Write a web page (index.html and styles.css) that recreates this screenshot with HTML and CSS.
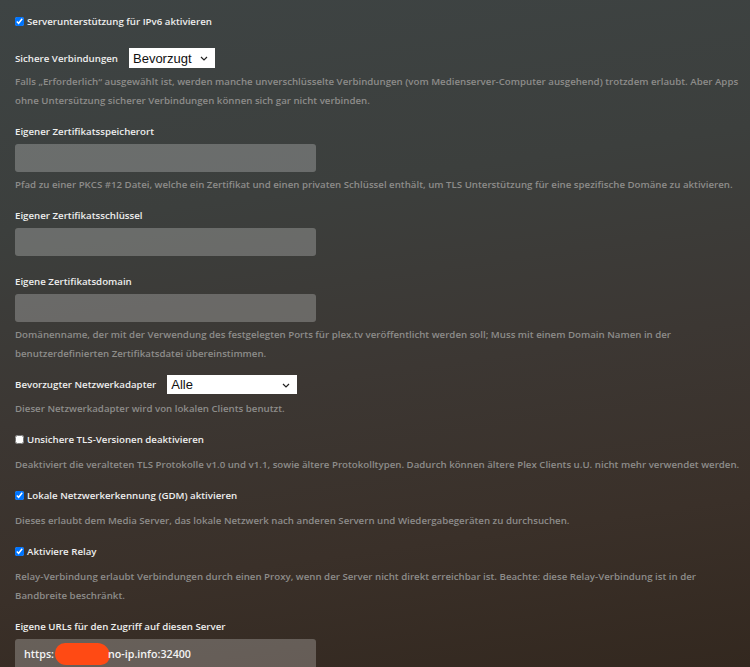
FILE: index.html
```html
<!DOCTYPE html>
<html>
<head>
    <title>Netzwerk</title>
    <link rel="stylesheet" href="styles.css">
</head>
<body>
    <div class="settings">

        <div class="setting">
            <label class="check-row"><input type="checkbox" checked> Serverunterstützung für IPv6 aktivieren</label>
        </div>

        <div class="setting select-setting">
            <div class="select-row">
                <span class="label">Sichere Verbindungen</span>
                <span class="select-wrap">
                    <select class="select short"><option>Bevorzugt</option></select>
                    <svg class="chevron" width="8" height="5" viewBox="0 0 8 5"><path d="M1 1l3 3 3-3" fill="none" stroke="#222" stroke-width="1.2"/></svg>
                </span>
            </div>
            <p class="help">Falls „Erforderlich“ ausgewählt ist, werden manche unverschlüsselte Verbindungen (vom Medienserver-Computer ausgehend) trotzdem erlaubt. Aber Apps ohne Untersützung sicherer Verbindungen können sich gar nicht verbinden.</p>
        </div>

        <div class="setting">
            <div class="label">Eigener Zertifikatsspeicherort</div>
            <input class="text-field" type="text">
            <p class="help">Pfad zu einer PKCS #12 Datei, welche ein Zertifikat und einen privaten Schlüssel enthält, um TLS Unterstützung für eine spezifische Domäne zu aktivieren.</p>
        </div>

        <div class="setting">
            <div class="label">Eigener Zertifikatsschlüssel</div>
            <input class="text-field" type="text">
        </div>

        <div class="setting spaced">
            <div class="label">Eigene Zertifikatsdomain</div>
            <input class="text-field" type="text">
            <p class="help">Domänenname, der mit der Verwendung des festgelegten Ports für plex.tv veröffentlicht werden soll; Muss mit einem Domain Namen in der benutzerdefinierten Zertifikatsdatei übereinstimmen.</p>
        </div>

        <div class="setting">
            <div class="select-row adapter">
                <span class="label">Bevorzugter Netzwerkadapter</span>
                <span class="select-wrap">
                    <select class="select wide"><option>Alle</option></select>
                    <svg class="chevron" width="8" height="5" viewBox="0 0 8 5"><path d="M1 1l3 3 3-3" fill="none" stroke="#222" stroke-width="1.2"/></svg>
                </span>
            </div>
            <p class="help">Dieser Netzwerkadapter wird von lokalen Clients benutzt.</p>
        </div>

        <div class="setting">
            <label class="check-row"><input type="checkbox"> Unsichere TLS-Versionen deaktivieren</label>
            <p class="help">Deaktiviert die veralteten TLS Protokolle v1.0 und v1.1, sowie ältere Protokolltypen. Dadurch können ältere Plex Clients u.U. nicht mehr verwendet werden.</p>
        </div>

        <div class="setting">
            <label class="check-row"><input type="checkbox" checked> Lokale Netzwerkerkennung (GDM) aktivieren</label>
            <p class="help">Dieses erlaubt dem Media Server, das lokale Netzwerk nach anderen Servern und Wiedergabegeräten zu durchsuchen.</p>
        </div>

        <div class="setting">
            <label class="check-row"><input type="checkbox" checked> Aktiviere Relay</label>
            <p class="help">Relay-Verbindung erlaubt Verbindungen durch einen Proxy, wenn der Server nicht direkt erreichbar ist. Beachte: diese Relay-Verbindung ist in der Bandbreite beschränkt.</p>
        </div>

        <div class="setting last">
            <div class="label">Eigene URLs für den Zugriff auf diesen Server</div>
            <div class="text-field filled">https:<span class="redacted"></span>no-ip.info:32400</div>
        </div>

    </div>
</body>
</html>
```

FILE: styles.css
```css
body {
    margin: 0;
    height: 667px;
    font-family: "Open Sans", "Liberation Sans", sans-serif;
    font-weight: 600;
    font-size: 9.7px;
    color: #eeeeee;
    background: linear-gradient(172deg, #3e4444 0%, #3c3f3d 30%, #3c3733 55%, #3a3029 78%, #33281f 100%);
    overflow: hidden;
}

.settings {
    padding: 12px 0 0 15px;
    width: 735px;
}

.setting {
    margin-bottom: 12px;
}

.setting.spaced {
    margin-top: 16px;
}

.setting.last {
    margin-top: 9px;
}

.select-setting {
    margin-top: 17px;
}

.label {
    line-height: 19px;
    margin-bottom: 3px;
}

.check-row {
    display: flex;
    align-items: center;
    line-height: 19px;
    margin-bottom: 6px;
}

.check-row input {
    margin: 0 3px 0 0;
    width: 9px;
    height: 9px;
}

.select-row {
    display: flex;
    align-items: center;
    gap: 11px;
    margin-bottom: 4px;
}

.select-row.adapter {
    margin-bottom: 5px;
}

.select-row .label {
    margin-bottom: 0;
}

.select-wrap {
    position: relative;
    display: inline-block;
}

.select {
    appearance: none;
    -webkit-appearance: none;
    border: none;
    border-radius: 0;
    background: #ffffff;
    color: #111111;
    font-family: "Liberation Sans", Arial, sans-serif;
    font-weight: 400;
    font-size: 13px;
    height: 20px;
    padding: 0 0 0 4px;
    display: block;
}

.select.short {
    width: 86px;
}

.select.wide {
    width: 130px;
    height: 19px;
}

.chevron {
    position: absolute;
    right: 7px;
    top: 8px;
    pointer-events: none;
}

.help {
    margin: 0;
    line-height: 19px;
    color: #8d8c8a;
}

.text-field {
    display: block;
    box-sizing: border-box;
    width: 301px;
    height: 28px;
    border: none;
    border-radius: 3px;
    background: rgba(255, 255, 255, 0.24);
    margin: 0 0 3px;
    padding: 0 9px;
    color: #f4f4f4;
    font-family: "Open Sans", "Liberation Sans", sans-serif;
    font-weight: 600;
    font-size: 10.7px;
}

.text-field.filled {
    line-height: 30px;
    height: 40px;
}

.redacted {
    display: inline-block;
    width: 55px;
    height: 22px;
    margin: 0 -2px -7px 1px;
    border-radius: 11px 14px 10px 12px;
    background: #ff4a14;
}
```
